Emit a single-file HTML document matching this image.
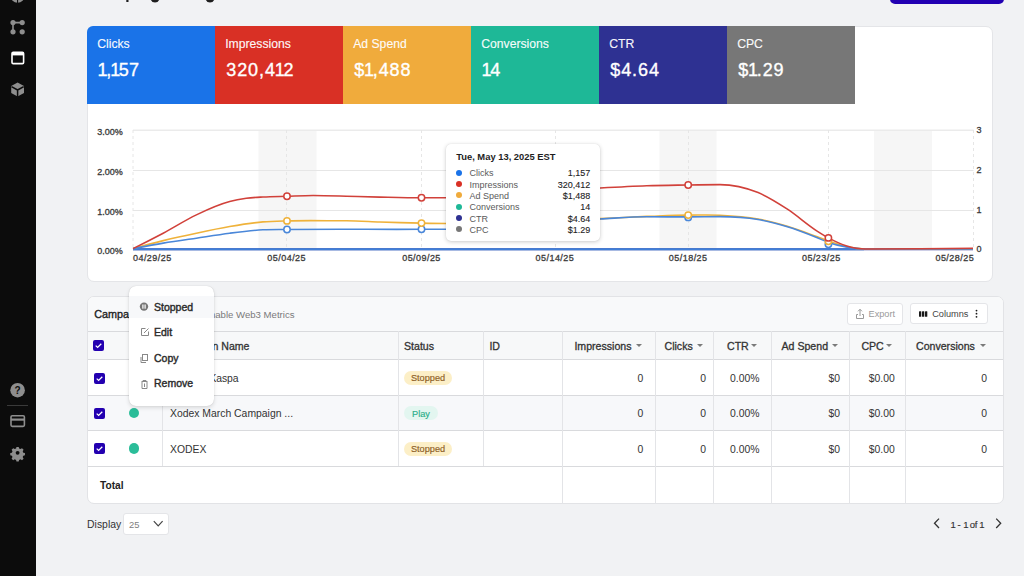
<!DOCTYPE html>
<html><head><meta charset="utf-8">
<style>
*{box-sizing:border-box;margin:0;padding:0}
html,body{width:1024px;height:576px;overflow:hidden}
body{background:#f1f2f4;position:relative;font-family:"Liberation Sans",sans-serif;color:#222}
.abs{position:absolute}
.t{position:absolute;white-space:nowrap}
.car{position:absolute;width:0;height:0;border-left:3.2px solid transparent;border-right:3.2px solid transparent;border-top:3.2px solid #7a7a7a}
.cb{position:absolute;width:11px;height:11px;background:#2300b0;border-radius:2px}
.dot{position:absolute;width:10.4px;height:10.4px;border-radius:50%;background:#2bbd99}
</style></head><body>
<div class="abs" style="left:0;top:0;width:36px;height:576px;background:#0c0c0c">
<svg width="36" height="576" viewBox="0 0 36 576">
 <circle cx="17.6" cy="-4.2" r="7" fill="#8e8e8e"/><rect x="17" y="-2" width="1.1" height="5" fill="#0c0c0c"/>
 <g fill="#8e8e8e"><circle cx="13" cy="22.6" r="2.6"/><circle cx="22.2" cy="22.6" r="2.6"/><circle cx="13" cy="31.8" r="2.6"/><circle cx="22.2" cy="31.8" r="2.6"/></g>
 <path d="M13 22.6H22.2M13 22.6V31.8" stroke="#8e8e8e" stroke-width="1.6"/>
 <rect x="12" y="52.4" width="11.6" height="11.2" rx="1.2" fill="none" stroke="#fff" stroke-width="1.6"/>
 <rect x="12" y="52.4" width="11.6" height="3" fill="#fff"/>
 <path d="M17.6 82.4L24 86V93L17.6 96.6L11.2 93V86Z" fill="#8e8e8e"/>
 <path d="M17.6 90V97M17.6 90L11.5 86.6M17.6 90L23.7 86.6" stroke="#0c0c0c" stroke-width="1.5" fill="none"/>
 <circle cx="17.6" cy="390.2" r="7.3" fill="#8e8e8e"/>
 <text x="17.6" y="394" font-size="10" font-weight="bold" fill="#0c0c0c" text-anchor="middle" font-family="Liberation Sans">?</text>
 <rect x="7" y="405" width="21" height="1" fill="#3a3a3a"/>
 <rect x="11" y="415.8" width="13.4" height="10.6" rx="1.3" fill="none" stroke="#8e8e8e" stroke-width="1.6"/>
 <rect x="11" y="418.5" width="13.4" height="2.2" fill="#8e8e8e"/>
 <g transform="translate(17.6 452.8) scale(0.8)" fill="#8e8e8e">
  <path d="M-1.4,-7.4h2.8l0.5,2.1l1.7,0.7l1.9,-1.1l2,2l-1.1,1.9l0.7,1.7l2.1,0.5v2.8l-2.1,0.5l-0.7,1.7l1.1,1.9l-2,2l-1.9,-1.1l-1.7,0.7l-0.5,2.1h-2.8l-0.5,-2.1l-1.7,-0.7l-1.9,1.1l-2,-2l1.1,-1.9l-0.7,-1.7l-2.1,-0.5v-2.8l2.1,-0.5l0.7,-1.7l-1.1,-1.9l2,-2l1.9,1.1l1.7,-0.7z"/>
  <circle r="2.4" fill="#0c0c0c"/>
 </g>
</svg>
</div>
<svg class="abs" style="left:0;top:0" width="1024" height="6">
 <rect x="126.3" y="-2" width="2.2" height="4" fill="#1e1e1e"/>
 <path d="M150.5,-1 Q151.5,2.6 155,2.6 Q158.5,2.6 159.5,-1Z" fill="#1e1e1e"/>
 <path d="M205.5,-1 Q206.5,2.6 210,2.6 Q213.5,2.6 214.5,-1Z" fill="#1e1e1e"/>
</svg>
<div class="abs" style="left:890px;top:-20px;width:114px;height:23.5px;background:#2200b2;border-radius:5px"></div>
<div class="abs" style="left:87px;top:26px;width:906px;height:255.6px;background:#fff;border:1px solid #e4e5e8;border-radius:7px"></div>
<div class="abs" style="left:87px;top:26px;width:128px;height:78px;background:#1a73e8;border-top-left-radius:6px"></div>
<div class="t" style="left:97.20px;top:37.25px;font-size:12.20px;line-height:14.64px;color:rgba(255,255,255,.94);-webkit-text-stroke:0.20px rgba(255,255,255,.94);">Clicks</div>
<div class="t" style="left:98.60px;top:59.66px;font-size:18.00px;line-height:21.60px;color:#fff;letter-spacing:0.2px;-webkit-text-stroke:0.35px #fff;"><span style="margin-left:-1.2px;letter-spacing:-1.3px">1</span>,<span style="margin-left:-1.2px;letter-spacing:-1.3px">1</span>57</div>
<div class="abs" style="left:215px;top:26px;width:128px;height:78px;background:#d93025;"></div>
<div class="t" style="left:225.20px;top:37.25px;font-size:12.20px;line-height:14.64px;color:rgba(255,255,255,.94);-webkit-text-stroke:0.20px rgba(255,255,255,.94);">Impressions</div>
<div class="t" style="left:226.30px;top:59.66px;font-size:18.00px;line-height:21.60px;color:#fff;letter-spacing:0.9px;-webkit-text-stroke:0.35px #fff;">320,4<span style="margin-left:-1.2px;letter-spacing:-1.3px">1</span>2</div>
<div class="abs" style="left:343px;top:26px;width:128px;height:78px;background:#f0ab3c;"></div>
<div class="t" style="left:353.20px;top:37.25px;font-size:12.20px;line-height:14.64px;color:rgba(255,255,255,.94);-webkit-text-stroke:0.20px rgba(255,255,255,.94);">Ad Spend</div>
<div class="t" style="left:354.30px;top:59.66px;font-size:18.00px;line-height:21.60px;color:#fff;letter-spacing:0.9px;-webkit-text-stroke:0.35px #fff;">$<span style="margin-left:-1.2px;letter-spacing:-1.3px">1</span>,488</div>
<div class="abs" style="left:471px;top:26px;width:128px;height:78px;background:#1eb897;"></div>
<div class="t" style="left:481.20px;top:37.25px;font-size:12.20px;line-height:14.64px;color:rgba(255,255,255,.94);-webkit-text-stroke:0.20px rgba(255,255,255,.94);">Conversions</div>
<div class="t" style="left:482.60px;top:59.66px;font-size:18.00px;line-height:21.60px;color:#fff;letter-spacing:0.9px;-webkit-text-stroke:0.35px #fff;"><span style="margin-left:-1.2px;letter-spacing:-1.3px">1</span>4</div>
<div class="abs" style="left:599px;top:26px;width:128px;height:78px;background:#2e3192;"></div>
<div class="t" style="left:609.20px;top:37.25px;font-size:12.20px;line-height:14.64px;color:rgba(255,255,255,.94);-webkit-text-stroke:0.20px rgba(255,255,255,.94);">CTR</div>
<div class="t" style="left:610.30px;top:59.66px;font-size:18.00px;line-height:21.60px;color:#fff;letter-spacing:0.9px;-webkit-text-stroke:0.35px #fff;">$4.64</div>
<div class="abs" style="left:727px;top:26px;width:128px;height:78px;background:#777777;"></div>
<div class="t" style="left:737.20px;top:37.25px;font-size:12.20px;line-height:14.64px;color:rgba(255,255,255,.94);-webkit-text-stroke:0.20px rgba(255,255,255,.94);">CPC</div>
<div class="t" style="left:738.30px;top:59.66px;font-size:18.00px;line-height:21.60px;color:#fff;letter-spacing:0.9px;-webkit-text-stroke:0.35px #fff;">$<span style="margin-left:-1.2px;letter-spacing:-1.3px">1</span>.29</div>
<svg class="abs" style="left:0;top:0" width="1024" height="290">
 <g fill="#f6f6f6"><rect x="258.5" y="130" width="58" height="119"/><rect x="659.5" y="130" width="57" height="119"/><rect x="874" y="130" width="58" height="119"/></g>
 <path d="M133 130.2H973.5" stroke="#ebebeb" stroke-width="1.6"/><path d="M133 170.5H973.5M133 210.5H973.5" stroke="#e6e6e6" stroke-width="1"/>
 <path d="M133 130V249M286.5 130V249M421.5 130V249M555.5 130V249M688.5 130V249M828.5 130V249M973.5 130V249" stroke="#e6e6e6" stroke-width="1" stroke-dasharray="3 3"/>
 <path d="M133 249.2H973" stroke="#3a3d9a" stroke-width="2"/><path d="M133 249.2H864" stroke="#3f7fd8" stroke-width="2"/>
 <path d="M133.0,248.6C143.1,245.8 153.1,243.1 163.2,240.6C174.3,237.9 185.3,235.5 196.4,233.2C207.5,230.8 218.6,228.4 229.7,226.5C240.8,224.6 251.8,222.8 262.9,221.9C270.9,221.2 279.0,221.1 287.0,220.9C306.8,220.3 326.6,220.8 346.4,220.8C357.5,220.8 368.6,221.6 379.7,222.0C393.6,222.4 407.6,222.8 421.5,223.1C429.7,223.3 437.8,223.5 446.0,223.5C471.7,223.5 497.3,222.3 523.0,221.5C548.8,220.7 574.5,219.7 600.3,218.6C615.8,217.9 631.3,217.0 646.8,216.4C660.6,215.9 674.4,215.1 688.2,215.1C698.8,215.1 709.4,214.7 720.0,215.2C732.7,215.8 745.4,216.7 758.1,219.0C767.9,220.8 777.6,223.4 787.4,226.3C797.2,229.2 806.9,233.0 816.7,236.6C820.6,238.0 824.5,239.6 828.4,241.0C834.3,243.1 840.1,245.2 846.0,246.5C852.5,248.0 859.0,249.0 865.5,249.0C901.3,249.0 937.2,249.0 973.0,249.0" stroke="#efb23a" stroke-width="1.6" fill="none"/>
 <path d="M133.0,248.6C143.1,246.7 153.1,244.8 163.2,243.1C174.3,241.3 185.3,239.8 196.4,238.2C207.5,236.5 218.6,234.6 229.7,233.2C240.8,231.8 251.8,230.4 262.9,229.8C270.9,229.4 279.0,229.6 287.0,229.5C331.8,229.0 376.7,229.5 421.5,229.3C429.7,229.3 437.8,229.4 446.0,229.2C471.7,228.6 497.3,224.7 523.0,223.0C548.8,221.3 574.5,220.3 600.3,219.0C615.8,218.2 631.3,216.8 646.8,216.8C660.6,216.8 674.4,216.9 688.2,216.9C698.8,216.9 709.4,216.6 720.0,216.6C732.7,216.6 745.4,217.3 758.1,219.5C767.9,221.2 777.6,223.8 787.4,226.8C797.2,229.8 806.9,233.6 816.7,237.5C820.6,239.1 824.5,241.0 828.4,242.4C834.3,244.5 840.1,245.8 846.0,246.9C852.5,248.1 859.0,249.0 865.5,249.0C901.3,249.0 937.2,249.0 973.0,249.0" stroke="#4a87d9" stroke-width="1.6" fill="none"/>
 <path d="M133.0,248.6C143.1,243.6 153.1,238.5 163.2,233.2C174.3,227.3 185.3,220.2 196.4,214.9C207.5,209.6 218.6,204.5 229.7,201.6C235.2,200.1 240.8,199.1 246.3,198.3C251.8,197.5 257.4,197.3 262.9,197.0C270.9,196.5 279.0,196.5 287.0,196.3C295.7,196.0 304.5,195.5 313.2,195.5C324.3,195.5 335.3,195.9 346.4,196.2C357.5,196.5 368.6,196.9 379.7,197.1C393.6,197.4 407.6,197.8 421.5,197.8C429.7,197.8 437.8,197.8 446.0,197.8C471.7,197.8 497.3,194.6 523.0,193.0C548.8,191.4 574.5,189.4 600.3,188.0C615.8,187.1 631.3,186.2 646.8,185.7C660.6,185.3 674.4,185.2 688.2,185.0C698.8,184.8 709.4,184.6 720.0,184.6C732.7,184.6 745.4,187.4 758.1,192.6C767.9,196.6 777.6,202.8 787.4,209.2C797.2,215.6 806.9,224.5 816.7,230.8C820.6,233.3 824.5,235.8 828.4,237.9C834.3,241.1 840.1,243.9 846.0,245.7C852.5,247.7 859.0,249.0 865.5,249.0C901.3,249.0 937.2,248.6 973.0,248.2" stroke="#d1413a" stroke-width="1.6" fill="none"/>
 <g fill="#fff" stroke-width="1.5"><circle cx="287" cy="229.5" r="3.2" stroke="#4a87d9"/><circle cx="287" cy="220.9" r="3.2" stroke="#efb23a"/><circle cx="287" cy="196.3" r="3.2" stroke="#d1413a"/><circle cx="421.5" cy="229.3" r="3.2" stroke="#4a87d9"/><circle cx="421.5" cy="223.1" r="3.2" stroke="#efb23a"/><circle cx="421.5" cy="197.8" r="3.2" stroke="#d1413a"/><circle cx="688.2" cy="217.4" r="3.2" stroke="#4a87d9"/><circle cx="688.2" cy="215.1" r="3.2" stroke="#efb23a"/><circle cx="688.2" cy="185" r="3.2" stroke="#d1413a"/><circle cx="828.4" cy="244.2" r="3.2" stroke="#4a87d9"/><circle cx="828.4" cy="241.2" r="3.2" stroke="#efb23a"/><circle cx="828.4" cy="237.9" r="3.2" stroke="#d1413a"/></g>
</svg>
<div class="t" style="left:62.80px;top:126.78px;width:60px;text-align:right;font-size:9.00px;line-height:10.80px;color:#3a3a3a;-webkit-text-stroke:0.30px #3a3a3a;">3.00%</div>
<div class="t" style="left:62.80px;top:166.78px;width:60px;text-align:right;font-size:9.00px;line-height:10.80px;color:#3a3a3a;-webkit-text-stroke:0.30px #3a3a3a;">2.00%</div>
<div class="t" style="left:62.80px;top:206.78px;width:60px;text-align:right;font-size:9.00px;line-height:10.80px;color:#3a3a3a;-webkit-text-stroke:0.30px #3a3a3a;">1.00%</div>
<div class="t" style="left:62.80px;top:245.78px;width:60px;text-align:right;font-size:9.00px;line-height:10.80px;color:#3a3a3a;-webkit-text-stroke:0.30px #3a3a3a;">0.00%</div>
<div class="t" style="left:976.60px;top:125.28px;font-size:9.00px;line-height:10.80px;color:#3a3a3a;-webkit-text-stroke:0.30px #3a3a3a;">3</div>
<div class="t" style="left:976.60px;top:165.28px;font-size:9.00px;line-height:10.80px;color:#3a3a3a;-webkit-text-stroke:0.30px #3a3a3a;">2</div>
<div class="t" style="left:976.60px;top:205.28px;font-size:9.00px;line-height:10.80px;color:#3a3a3a;-webkit-text-stroke:0.30px #3a3a3a;">1</div>
<div class="t" style="left:976.60px;top:244.28px;font-size:9.00px;line-height:10.80px;color:#3a3a3a;-webkit-text-stroke:0.30px #3a3a3a;">0</div>
<div class="t" style="left:133.00px;top:252.88px;font-size:9.00px;line-height:10.80px;color:#3a3a3a;letter-spacing:0.45px;-webkit-text-stroke:0.30px #3a3a3a;">04/29/25</div>
<div class="t" style="left:236.70px;top:252.88px;width:100px;text-align:center;font-size:9.00px;line-height:10.80px;color:#3a3a3a;letter-spacing:0.45px;-webkit-text-stroke:0.30px #3a3a3a;">05/04/25</div>
<div class="t" style="left:371.50px;top:252.88px;width:100px;text-align:center;font-size:9.00px;line-height:10.80px;color:#3a3a3a;letter-spacing:0.45px;-webkit-text-stroke:0.30px #3a3a3a;">05/09/25</div>
<div class="t" style="left:504.90px;top:252.88px;width:100px;text-align:center;font-size:9.00px;line-height:10.80px;color:#3a3a3a;letter-spacing:0.45px;-webkit-text-stroke:0.30px #3a3a3a;">05/14/25</div>
<div class="t" style="left:638.20px;top:252.88px;width:100px;text-align:center;font-size:9.00px;line-height:10.80px;color:#3a3a3a;letter-spacing:0.45px;-webkit-text-stroke:0.30px #3a3a3a;">05/18/25</div>
<div class="t" style="left:771.30px;top:252.88px;width:100px;text-align:center;font-size:9.00px;line-height:10.80px;color:#3a3a3a;letter-spacing:0.45px;-webkit-text-stroke:0.30px #3a3a3a;">05/23/25</div>
<div class="t" style="left:874.10px;top:252.88px;width:100px;text-align:right;font-size:9.00px;line-height:10.80px;color:#3a3a3a;letter-spacing:0.45px;-webkit-text-stroke:0.30px #3a3a3a;">05/28/25</div>
<div class="abs" style="left:446px;top:144px;width:154px;height:97px;background:#fff;border-radius:5px;box-shadow:0 1px 4px rgba(0,0,0,.2),0 0 1px rgba(0,0,0,.12)"></div>
<div class="t" style="left:456.20px;top:151.40px;font-size:9.40px;line-height:11.28px;color:#1e1e1e;font-weight:bold">Tue, May 13, 2025 EST</div>
<div class="abs" style="left:456.4px;top:169.60px;width:6px;height:6px;border-radius:3px;background:#1a73e8"></div>
<div class="t" style="left:469.60px;top:168.18px;font-size:9.00px;line-height:10.80px;color:#5a5a5a;">Clicks</div>
<div class="t" style="left:510.20px;top:168.18px;width:80px;text-align:right;font-size:9.00px;line-height:10.80px;color:#222;-webkit-text-stroke:0.10px #222;">1,157</div>
<div class="abs" style="left:456.4px;top:180.96px;width:6px;height:6px;border-radius:3px;background:#d93025"></div>
<div class="t" style="left:469.60px;top:179.54px;font-size:9.00px;line-height:10.80px;color:#5a5a5a;">Impressions</div>
<div class="t" style="left:510.20px;top:179.54px;width:80px;text-align:right;font-size:9.00px;line-height:10.80px;color:#222;-webkit-text-stroke:0.10px #222;">320,412</div>
<div class="abs" style="left:456.4px;top:192.32px;width:6px;height:6px;border-radius:3px;background:#f0ab3c"></div>
<div class="t" style="left:469.60px;top:190.90px;font-size:9.00px;line-height:10.80px;color:#5a5a5a;">Ad Spend</div>
<div class="t" style="left:510.20px;top:190.90px;width:80px;text-align:right;font-size:9.00px;line-height:10.80px;color:#222;-webkit-text-stroke:0.10px #222;">$1,488</div>
<div class="abs" style="left:456.4px;top:203.68px;width:6px;height:6px;border-radius:3px;background:#1eb897"></div>
<div class="t" style="left:469.60px;top:202.26px;font-size:9.00px;line-height:10.80px;color:#5a5a5a;">Conversions</div>
<div class="t" style="left:510.20px;top:202.26px;width:80px;text-align:right;font-size:9.00px;line-height:10.80px;color:#222;-webkit-text-stroke:0.10px #222;">14</div>
<div class="abs" style="left:456.4px;top:215.04px;width:6px;height:6px;border-radius:3px;background:#2e3192"></div>
<div class="t" style="left:469.60px;top:213.62px;font-size:9.00px;line-height:10.80px;color:#5a5a5a;">CTR</div>
<div class="t" style="left:510.20px;top:213.62px;width:80px;text-align:right;font-size:9.00px;line-height:10.80px;color:#222;-webkit-text-stroke:0.10px #222;">$4.64</div>
<div class="abs" style="left:456.4px;top:226.40px;width:6px;height:6px;border-radius:3px;background:#777777"></div>
<div class="t" style="left:469.60px;top:224.98px;font-size:9.00px;line-height:10.80px;color:#5a5a5a;">CPC</div>
<div class="t" style="left:510.20px;top:224.98px;width:80px;text-align:right;font-size:9.00px;line-height:10.80px;color:#222;-webkit-text-stroke:0.10px #222;">$1.29</div>
<div class="abs" style="left:87px;top:296px;width:917px;height:208px;background:#fff;border:1px solid #e2e3e6;border-radius:7px;overflow:hidden"><div class="abs" style="left:0;top:0;width:917px;height:34.5px;background:#f8f9fa"></div><div class="abs" style="left:0;top:34.5px;width:917px;height:28.5px;background:#f7f8f9"></div><div class="abs" style="left:0;top:98.7px;width:917px;height:35.4px;background:#f7f8fa"></div></div>
<div class="abs" style="left:88px;top:330.5px;width:915px;height:1px;background:#d9dadd"></div>
<div class="abs" style="left:88px;top:359.0px;width:915px;height:1px;background:#d9dadd"></div>
<div class="abs" style="left:88px;top:394.7px;width:915px;height:1px;background:#d9dadd"></div>
<div class="abs" style="left:88px;top:430.1px;width:915px;height:1px;background:#d9dadd"></div>
<div class="abs" style="left:88px;top:465.5px;width:915px;height:1px;background:#d9dadd"></div>
<div class="abs" style="left:161.8px;top:331px;width:1px;height:135.0px;background:#e3e4e7"></div>
<div class="abs" style="left:397.6px;top:331px;width:1px;height:135.0px;background:#e3e4e7"></div>
<div class="abs" style="left:482.6px;top:331px;width:1px;height:135.0px;background:#e3e4e7"></div>
<div class="abs" style="left:561.7px;top:331px;width:1px;height:172.8px;background:#e3e4e7"></div>
<div class="abs" style="left:654.7px;top:331px;width:1px;height:172.8px;background:#e3e4e7"></div>
<div class="abs" style="left:713.2px;top:331px;width:1px;height:172.8px;background:#e3e4e7"></div>
<div class="abs" style="left:770.7px;top:331px;width:1px;height:172.8px;background:#e3e4e7"></div>
<div class="abs" style="left:848.5px;top:331px;width:1px;height:172.8px;background:#e3e4e7"></div>
<div class="abs" style="left:905.0px;top:331px;width:1px;height:172.8px;background:#e3e4e7"></div>
<div class="t" style="left:94.30px;top:308.08px;font-size:10.80px;line-height:12.96px;color:#222;-webkit-text-stroke:0.35px #222;">Campaigns</div>
<div class="t" style="left:174.50px;top:309.01px;width:120px;text-align:right;font-size:9.60px;line-height:11.52px;color:#7a7a7a;">Enable Web3 Metrics</div>
<div class="abs" style="left:846.7px;top:303.4px;width:56px;height:21.4px;background:#fff;border:1px solid #e4e5e8;border-radius:3px"></div>
<div class="abs" style="left:910.3px;top:303.4px;width:77.7px;height:21px;background:#fff;border:1px solid #e4e5e8;border-radius:3px"></div>
<div class="t" style="left:868.50px;top:308.89px;font-size:9.20px;line-height:11.04px;color:#9a9a9a;">Export</div>
<div class="t" style="left:932.20px;top:308.89px;font-size:9.20px;line-height:11.04px;color:#444;">Columns</div>
<svg class="abs" style="left:850px;top:305px" width="140" height="18"><g fill="none" stroke="#9a9a9a" stroke-width="1"><path d="M8 9.5H6.5V13.5H13.5V9.5H12"/><path d="M10 11V4.3M8 6.3L10 4.3L12 6.3"/></g><g fill="#1a1a1a"><rect x="69" y="6.3" width="2.3" height="5.5" rx="0.5"/><rect x="72" y="6.3" width="2.3" height="5.5" rx="0.5"/><rect x="75" y="6.3" width="2.3" height="5.5" rx="0.5"/><circle cx="126.5" cy="5.6" r="0.9"/><circle cx="126.5" cy="8.7" r="0.9"/><circle cx="126.5" cy="11.8" r="0.9"/></g></svg>
<div class="cb" style="left:93.4px;top:340px"><svg width="11" height="11" style="position:absolute;left:0;top:0"><path d="M2.7 5.6L4.6 7.4L8.3 3.7" fill="none" stroke="#fff" stroke-width="1.3"/></svg></div>
<div class="t" style="left:170.00px;top:340.26px;font-size:10.60px;line-height:12.72px;color:#333;-webkit-text-stroke:0.30px #333;">Campaign Name</div>
<div class="t" style="left:404.00px;top:340.26px;font-size:10.60px;line-height:12.72px;color:#333;-webkit-text-stroke:0.30px #333;">Status</div>
<div class="t" style="left:489.40px;top:340.26px;font-size:10.60px;line-height:12.72px;color:#333;-webkit-text-stroke:0.30px #333;">ID</div>
<div class="t" style="left:574.40px;top:340.26px;font-size:10.60px;line-height:12.72px;color:#333;-webkit-text-stroke:0.30px #333;">Impressions</div>
<div class="car" style="left:635.5px;top:344.3px"></div>
<div class="t" style="left:664.50px;top:340.26px;font-size:10.60px;line-height:12.72px;color:#333;-webkit-text-stroke:0.30px #333;">Clicks</div>
<div class="car" style="left:696.8px;top:344.3px"></div>
<div class="t" style="left:727.00px;top:340.26px;font-size:10.60px;line-height:12.72px;color:#333;-webkit-text-stroke:0.30px #333;">CTR</div>
<div class="car" style="left:751.4px;top:344.3px"></div>
<div class="t" style="left:781.50px;top:340.26px;font-size:10.60px;line-height:12.72px;color:#333;-webkit-text-stroke:0.30px #333;">Ad Spend</div>
<div class="car" style="left:831.8px;top:344.3px"></div>
<div class="t" style="left:861.40px;top:340.26px;font-size:10.60px;line-height:12.72px;color:#333;-webkit-text-stroke:0.30px #333;">CPC</div>
<div class="car" style="left:886.1px;top:344.3px"></div>
<div class="t" style="left:916.00px;top:340.26px;font-size:10.60px;line-height:12.72px;color:#333;-webkit-text-stroke:0.30px #333;">Conversions</div>
<div class="car" style="left:979.8px;top:344.3px"></div>
<div class="cb" style="left:94px;top:372.5px"><svg width="11" height="11" style="position:absolute;left:0;top:0"><path d="M2.7 5.6L4.6 7.4L8.3 3.7" fill="none" stroke="#fff" stroke-width="1.3"/></svg></div>
<div class="t" style="left:170.00px;top:372.95px;font-size:10.40px;line-height:12.48px;color:#333;letter-spacing:-0.12px">Xodex x Kaspa</div>
<div class="abs" style="left:404px;top:371.0px;width:48px;height:14px;border-radius:7px;background:#fcefc7"></div>
<div class="t" style="left:398.00px;top:373.49px;width:60px;text-align:center;font-size:9.20px;line-height:11.04px;color:#8d5e26;-webkit-text-stroke:0.15px #8d5e26;">Stopped</div>
<div class="t" style="left:563.40px;top:372.95px;width:80px;text-align:right;font-size:10.40px;line-height:12.48px;color:#333;">0</div>
<div class="t" style="left:626.00px;top:372.95px;width:80px;text-align:right;font-size:10.40px;line-height:12.48px;color:#333;">0</div>
<div class="t" style="left:679.50px;top:372.95px;width:80px;text-align:right;font-size:10.40px;line-height:12.48px;color:#333;">0.00%</div>
<div class="t" style="left:760.00px;top:372.95px;width:80px;text-align:right;font-size:10.40px;line-height:12.48px;color:#333;">$0</div>
<div class="t" style="left:814.80px;top:372.95px;width:80px;text-align:right;font-size:10.40px;line-height:12.48px;color:#333;">$0.00</div>
<div class="t" style="left:907.00px;top:372.95px;width:80px;text-align:right;font-size:10.40px;line-height:12.48px;color:#333;">0</div>
<div class="cb" style="left:94px;top:407.7px"><svg width="11" height="11" style="position:absolute;left:0;top:0"><path d="M2.7 5.6L4.6 7.4L8.3 3.7" fill="none" stroke="#fff" stroke-width="1.3"/></svg></div>
<div class="dot" style="left:129px;top:408.0px"></div>
<div class="t" style="left:170.00px;top:408.15px;font-size:10.40px;line-height:12.48px;color:#333;">Xodex March Campaign ...</div>
<div class="abs" style="left:404px;top:406.2px;width:34px;height:14px;border-radius:7px;background:#e3f6f0"></div>
<div class="t" style="left:391.00px;top:408.69px;width:60px;text-align:center;font-size:9.20px;line-height:11.04px;color:#2aae89;-webkit-text-stroke:0.15px #2aae89;">Play</div>
<div class="t" style="left:563.40px;top:408.15px;width:80px;text-align:right;font-size:10.40px;line-height:12.48px;color:#333;">0</div>
<div class="t" style="left:626.00px;top:408.15px;width:80px;text-align:right;font-size:10.40px;line-height:12.48px;color:#333;">0</div>
<div class="t" style="left:679.50px;top:408.15px;width:80px;text-align:right;font-size:10.40px;line-height:12.48px;color:#333;">0.00%</div>
<div class="t" style="left:760.00px;top:408.15px;width:80px;text-align:right;font-size:10.40px;line-height:12.48px;color:#333;">$0</div>
<div class="t" style="left:814.80px;top:408.15px;width:80px;text-align:right;font-size:10.40px;line-height:12.48px;color:#333;">$0.00</div>
<div class="t" style="left:907.00px;top:408.15px;width:80px;text-align:right;font-size:10.40px;line-height:12.48px;color:#333;">0</div>
<div class="cb" style="left:94px;top:443.1px"><svg width="11" height="11" style="position:absolute;left:0;top:0"><path d="M2.7 5.6L4.6 7.4L8.3 3.7" fill="none" stroke="#fff" stroke-width="1.3"/></svg></div>
<div class="dot" style="left:129px;top:443.4px"></div>
<div class="t" style="left:170.00px;top:443.55px;font-size:10.40px;line-height:12.48px;color:#333;">XODEX</div>
<div class="abs" style="left:404px;top:441.6px;width:48px;height:14px;border-radius:7px;background:#fcefc7"></div>
<div class="t" style="left:398.00px;top:444.09px;width:60px;text-align:center;font-size:9.20px;line-height:11.04px;color:#8d5e26;-webkit-text-stroke:0.15px #8d5e26;">Stopped</div>
<div class="t" style="left:563.40px;top:443.55px;width:80px;text-align:right;font-size:10.40px;line-height:12.48px;color:#333;">0</div>
<div class="t" style="left:626.00px;top:443.55px;width:80px;text-align:right;font-size:10.40px;line-height:12.48px;color:#333;">0</div>
<div class="t" style="left:679.50px;top:443.55px;width:80px;text-align:right;font-size:10.40px;line-height:12.48px;color:#333;">0.00%</div>
<div class="t" style="left:760.00px;top:443.55px;width:80px;text-align:right;font-size:10.40px;line-height:12.48px;color:#333;">$0</div>
<div class="t" style="left:814.80px;top:443.55px;width:80px;text-align:right;font-size:10.40px;line-height:12.48px;color:#333;">$0.00</div>
<div class="t" style="left:907.00px;top:443.55px;width:80px;text-align:right;font-size:10.40px;line-height:12.48px;color:#333;">0</div>
<div class="t" style="left:100.00px;top:480.24px;font-size:10.20px;line-height:12.24px;color:#222;font-weight:bold">Total</div>
<div class="abs" style="left:129px;top:285.5px;width:84.6px;height:120px;background:#fff;border-radius:7px;box-shadow:0 2px 4px rgba(0,0,0,.12),0 0 1px rgba(0,0,0,.2);overflow:hidden"><div class="abs" style="left:0;top:10.3px;width:85px;height:22px;background:#f7f8fa"></div></div>
<div class="t" style="left:154.00px;top:301.16px;font-size:10.50px;line-height:12.60px;color:#2a2a2a;-webkit-text-stroke:0.40px #2a2a2a;">Stopped</div>
<div class="t" style="left:154.00px;top:326.16px;font-size:10.50px;line-height:12.60px;color:#2a2a2a;-webkit-text-stroke:0.40px #2a2a2a;">Edit</div>
<div class="t" style="left:154.00px;top:351.86px;font-size:10.50px;line-height:12.60px;color:#2a2a2a;-webkit-text-stroke:0.40px #2a2a2a;">Copy</div>
<div class="t" style="left:154.00px;top:377.16px;font-size:10.50px;line-height:12.60px;color:#2a2a2a;-webkit-text-stroke:0.40px #2a2a2a;">Remove</div>
<svg class="abs" style="left:136px;top:296px" width="16" height="100"><circle cx="8" cy="10.6" r="4.2" fill="#777"/><rect x="6.3" y="8.5" width="1.2" height="4.2" fill="#fff"/><rect x="8.5" y="8.5" width="1.2" height="4.2" fill="#fff"/><g fill="none" stroke="#888" stroke-width="1"><path d="M9.5 32.5H5.5V39.5H12.5V35.5"/><path d="M8 37L12.5 32.5"/><rect x="6.5" y="58.5" width="5" height="6"/><path d="M5 61V66.5H10"/><path d="M5.5 85.5H11.5M7 85.5V84.5H10V85.5M6 86V92.5H11V86M8.5 87.5V91"/></g></svg>
<div class="t" style="left:87.10px;top:518.65px;font-size:10.40px;line-height:12.48px;color:#333;">Display</div>
<div class="abs" style="left:122.6px;top:513px;width:46.4px;height:21.8px;background:#fff;border:1px solid #e4e5e8;border-radius:3px"></div>
<div class="t" style="left:129.00px;top:519.40px;font-size:9.40px;line-height:11.28px;color:#808080;">25</div>
<svg class="abs" style="left:150px;top:516px" width="16" height="14"><path d="M3.8 5.2L8.2 9.8L12.6 5.2" fill="none" stroke="#444" stroke-width="1.2"/></svg>
<div class="t" style="left:950.40px;top:518.91px;font-size:9.50px;line-height:11.40px;color:#333;-webkit-text-stroke:0.15px #333;"><span style="letter-spacing:-0.9px">1</span> - <span style="letter-spacing:-1.2px">1</span><span style="letter-spacing:-0.2px"> of </span><span style="margin-left:-0.6px">1</span></div>
<svg class="abs" style="left:930px;top:516px" width="74" height="14"><path d="M9 2.6L4.5 7.3L9 12M66.2 2.6L70.7 7.3L66.2 12" fill="none" stroke="#333" stroke-width="1.3"/></svg>
</body></html>
